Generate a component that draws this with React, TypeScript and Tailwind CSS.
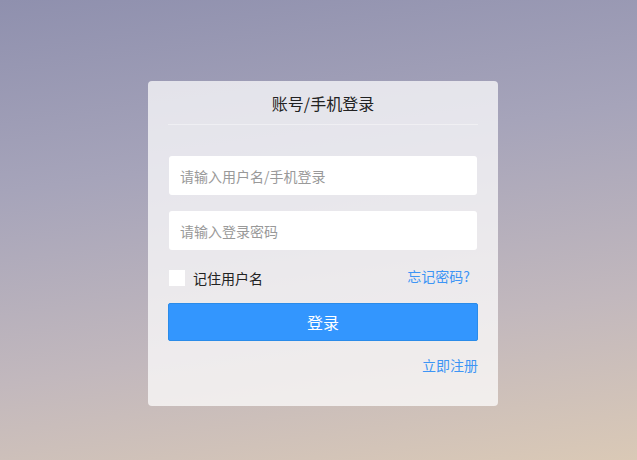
import React from "react";

export default function App() {
  return (
    <div
      className="h-[460px] w-full flex items-start justify-center pl-[9px] bg-[linear-gradient(172deg,#8f90ae_0%,#a6a4ba_35%,#c2b8bd_70%,#dac9b6_100%)]"
      style={{ fontFamily: '"Noto Sans CJK SC", "Noto Sans", sans-serif' }}
    >
      <div className="mt-[81px] w-[350px] h-[325px] rounded-[4px] bg-[rgba(255,255,255,0.72)] px-5 flex flex-col">
        <div className="h-[44px] flex items-center justify-center border-b border-white/40 text-[16px] text-[#222]">
          账号/手机登录
        </div>
        <div className="mt-[31px] flex flex-col gap-4 px-px">
          <input
            className="h-[39px] w-full rounded-[3px] bg-white px-[11px] text-[14px] text-[#333] outline-none placeholder:text-[#999]"
            placeholder="请输入用户名/手机登录"
          />
          <input
            type="password"
            className="h-[39px] w-full rounded-[3px] bg-white px-[11px] text-[14px] text-[#333] outline-none placeholder:text-[#999]"
            placeholder="请输入登录密码"
          />
        </div>
        <div className="mt-[16px] h-[24px] flex items-center justify-between">
          <label className="flex items-center gap-2 text-[14px] text-[#222] pl-px">
            <span className="w-4 h-4 bg-white"></span>
            记住用户名
          </label>
          <a className="text-[14px] text-[#3d95f5] pr-2 -mt-[4px]">忘记密码?</a>
        </div>
        <button className="mt-[13px] h-[38px] w-full rounded-[2px] bg-[#3396fe] border border-[#2a8be9] text-white text-[16px]">
          登录
        </button>
        <div className="mt-[14px] flex justify-end">
          <a className="text-[14px] text-[#3d95f5]">立即注册</a>
        </div>
      </div>
    </div>
  );
}
